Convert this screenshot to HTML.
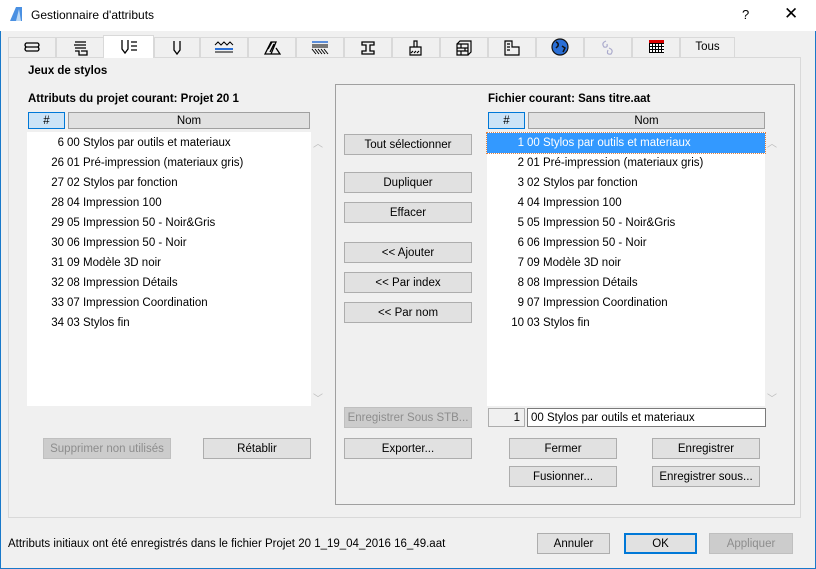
<!DOCTYPE html>
<html><head><meta charset="utf-8"><style>
*{margin:0;padding:0;box-sizing:border-box}
body{width:816px;height:569px;position:relative;background:#f0f0f0;font-family:"Liberation Sans",sans-serif;font-size:11.5px;color:#000;overflow:hidden}
.a{position:absolute}
.win{position:absolute;left:0;top:0;width:816px;height:569px;border:1px solid #1979ca;border-top:none}
.title{left:0;top:0;width:816px;height:31px;background:#fff}
.btn{position:absolute;background:#e1e1e1;border:1px solid #adadad;text-align:center;line-height:20px;height:21px}
.dis{color:#8d8d8d;background:#ccc;border-color:#bfbfbf}
.tab{position:absolute;top:37px;height:20px;border:1px solid #d9d9d9;border-bottom:none;background:#f0f0f0;text-align:center;line-height:19px}
.tab svg{margin-top:2px}
.list{position:absolute;background:#fff}
.row{position:absolute;height:20px;line-height:21px;left:0;right:0;white-space:nowrap}
.row .n{position:absolute;text-align:right;width:37px}
.row .t{position:absolute;left:40px}
.hdr{position:absolute;height:17px;border:1px solid #a0a0a0;background:#e1e1e1;text-align:center;line-height:16px}
.hsel{background:#cce4f7;border:1px solid #0078d7}
b{font-weight:bold}
</style></head><body>
<div class="win"></div>
<div class="a title"></div>
<svg class="a" style="left:9px;top:6px" width="14" height="16"><path d="M1 15 L7 1 L13 1 L13 15 Z" fill="#4a90e2"/><path d="M7 15 L10 3 L12 15Z" fill="#bcd9f5"/></svg>
<div class="a" style="left:31px;top:8px;font-size:12px">Gestionnaire d'attributs</div>
<div class="a" style="left:742px;top:7px;font-size:13px">?</div>
<div class="a" style="left:784px;top:4px;font-size:17px;font-weight:300">✕</div>

<div class="a" style="left:8px;top:57px;width:793px;height:461px;border:1px solid #d9d9d9;background:#f0f0f0"></div>
<div class="tab" style="left:8px;width:48px"><svg width="18" height="14"><g fill="none" stroke="#000" stroke-width="1.3"><path d="M3 3h12M2 7h13M3 11h12"/><path d="M3 3q-2 2 0 4M3 7q-2 2 0 4M15 3q2 2 0 4M15 7q2 2 0 4"/></g></svg></div>
<div class="tab" style="left:56px;width:48px"><svg width="18" height="16"><g fill="none" stroke="#000" stroke-width="1.3"><path d="M4 2h11M3 5h12M4 8h11M4 11h4v4h8v-4h-6"/></g></svg></div>
<div class="tab" style="left:103px;top:35px;height:23px;width:51px;background:#fff;z-index:2"><svg width="22" height="16" style="margin-top:3px"><g fill="none" stroke="#000" stroke-width="1.3"><path d="M4 1v9l3 4 3-4V1M13 3h6M13 7h6M13 11h6"/></g></svg></div>
<div class="tab" style="left:154px;width:46px"><svg width="12" height="16"><path d="M3 1v9l3 4 3-4V1" fill="none" stroke="#000" stroke-width="1.3"/></svg></div>
<div class="tab" style="left:200px;width:48px"><svg width="20" height="14"><path d="M1 5l3-3 3 3 3-3 3 3 3-3 3 3" fill="none" stroke="#000"/><path d="M1 9h18" stroke="#2a6fd6" stroke-width="2"/><path d="M1 12h18" stroke="#000"/></svg></div>
<div class="tab" style="left:248px;width:48px"><svg width="18" height="16"><g fill="none" stroke="#000" stroke-width="1.3"><path d="M2 14l6-12h5l-5 12zM8 14h9l-4-6M5 9l4-7M7 12l4-8"/></g></svg></div>
<div class="tab" style="left:296px;width:48px"><svg width="18" height="16"><path d="M1 2h16" stroke="#2a6fd6" stroke-width="1.5"/><path d="M1 5h16M1 7h16" stroke="#000"/><path d="M1 9l4 5M4 9l4 5M7 9l4 5M10 9l4 5M13 9l4 5" stroke="#000"/></svg></div>
<div class="tab" style="left:344px;width:48px"><svg width="16" height="16"><path d="M2 2h12v3h-4v6h4v3H2v-3h4V5H2z" fill="none" stroke="#000" stroke-width="1.3"/></svg></div>
<div class="tab" style="left:392px;width:48px"><svg width="16" height="16"><g fill="none" stroke="#000" stroke-width="1.2"><path d="M6 1h3v6H6zM2 7h11v8H2zM3 13l2-2M6 13l2-2M9 13l2-2"/></g></svg></div>
<div class="tab" style="left:440px;width:48px"><svg width="18" height="16"><g fill="none" stroke="#000" stroke-width="1.2"><path d="M2 4h11v11H2zM2 4l3-3h11v11l-3 3M2 8h11M2 11h11M6 4v4M10 8v3M6 11v4"/></g></svg></div>
<div class="tab" style="left:488px;width:48px"><svg width="18" height="16"><g fill="none" stroke="#000" stroke-width="1.2"><path d="M2 1h7v6h7v8H2zM4 4h3M4 7h3M4 10h3"/></g></svg></div>
<div class="tab" style="left:536px;width:48px"><svg width="18" height="18" style="margin-top:0"><circle cx="9" cy="9" r="8" fill="#2a6fd6" stroke="#111" stroke-width="1.2"/><path d="M5 4q3 1 2 4l-2 2M11 8l3 2-2 4" stroke="#111" stroke-width="1.5" fill="none"/></svg></div>
<div class="tab" style="left:584px;width:48px"><svg width="18" height="16"><g fill="none" stroke="#aac" stroke-width="1.2"><path d="M7 1q-5 2-2 6 4 1 3-3M10 8q5 2 2 6-5 1-3-4"/></g></svg></div>
<div class="tab" style="left:632px;width:48px"><span style="display:inline-block;width:15px;height:13px;background:repeating-linear-gradient(90deg,#000 0 1px,transparent 1px 3px),repeating-linear-gradient(0deg,#000 0 1px,#fff 1px 3px);border-top:3px solid #d00;vertical-align:middle"></span></div>
<div class="tab" style="left:680px;width:55px">Tous</div>

<div class="a" style="left:28px;top:65px"><b>Jeux de stylos</b></div>
<div class="a" style="left:28px;top:93px"><b>Attributs du projet courant: Projet 20 1</b></div>
<div class="hdr hsel" style="left:28px;top:112px;width:37px">#</div>
<div class="hdr" style="left:68px;top:112px;width:242px">Nom</div>
<div class="list" style="left:27px;top:132px;width:284px;height:274px">
<div class="row" style="top:1px"><span class="n">6</span><span class="t">00 Stylos par outils et materiaux</span></div>
<div class="row" style="top:21px"><span class="n">26</span><span class="t">01 Pré-impression (materiaux gris)</span></div>
<div class="row" style="top:41px"><span class="n">27</span><span class="t">02 Stylos par fonction</span></div>
<div class="row" style="top:61px"><span class="n">28</span><span class="t">04 Impression 100</span></div>
<div class="row" style="top:81px"><span class="n">29</span><span class="t">05 Impression 50 - Noir&amp;Gris</span></div>
<div class="row" style="top:101px"><span class="n">30</span><span class="t">06 Impression 50 - Noir</span></div>
<div class="row" style="top:121px"><span class="n">31</span><span class="t">09 Modèle 3D noir</span></div>
<div class="row" style="top:141px"><span class="n">32</span><span class="t">08 Impression Détails</span></div>
<div class="row" style="top:161px"><span class="n">33</span><span class="t">07 Impression Coordination</span></div>
<div class="row" style="top:181px"><span class="n">34</span><span class="t">03 Stylos fin</span></div>
</div>
<div class="a" style="left:313px;top:135px;color:#bbb;font-size:10px">︿</div>
<div class="a" style="left:313px;top:390px;color:#bbb;font-size:10px">﹀</div>
<div class="btn dis" style="left:43px;top:438px;width:128px">Supprimer non utilisés</div>
<div class="btn" style="left:203px;top:438px;width:108px">Rétablir</div>

<div class="a" style="left:335px;top:84px;width:460px;height:421px;border:1px solid #a0a0a0"></div>
<div class="a" style="left:488px;top:93px"><b>Fichier courant: Sans titre.aat</b></div>
<div class="hdr hsel" style="left:488px;top:112px;width:37px">#</div>
<div class="hdr" style="left:528px;top:112px;width:237px">Nom</div>
<div class="list" style="left:487px;top:132px;width:278px;height:274px">
<div class="row" style="top:1px;height:20px;background:#3399ff;color:#fff;outline:1px dotted #e08040;line-height:20px"><span class="n">1</span><span class="t">00 Stylos par outils et materiaux</span></div>
<div class="row" style="top:21px"><span class="n">2</span><span class="t">01 Pré-impression (materiaux gris)</span></div>
<div class="row" style="top:41px"><span class="n">3</span><span class="t">02 Stylos par fonction</span></div>
<div class="row" style="top:61px"><span class="n">4</span><span class="t">04 Impression 100</span></div>
<div class="row" style="top:81px"><span class="n">5</span><span class="t">05 Impression 50 - Noir&amp;Gris</span></div>
<div class="row" style="top:101px"><span class="n">6</span><span class="t">06 Impression 50 - Noir</span></div>
<div class="row" style="top:121px"><span class="n">7</span><span class="t">09 Modèle 3D noir</span></div>
<div class="row" style="top:141px"><span class="n">8</span><span class="t">08 Impression Détails</span></div>
<div class="row" style="top:161px"><span class="n">9</span><span class="t">07 Impression Coordination</span></div>
<div class="row" style="top:181px"><span class="n">10</span><span class="t">03 Stylos fin</span></div>
</div>
<div class="a" style="left:767px;top:135px;color:#bbb;font-size:10px">︿</div>
<div class="a" style="left:767px;top:390px;color:#bbb;font-size:10px">﹀</div>
<div class="a" style="left:488px;top:408px;width:37px;height:19px;border:1px solid #adadad;background:#f0f0f0;text-align:right;padding-right:4px;line-height:18px">1</div>
<div class="a" style="left:527px;top:408px;width:239px;height:19px;border:1px solid #7a7a7a;background:#fff;padding-left:3px;line-height:18px">00 Stylos par outils et materiaux</div>

<div class="btn" style="left:344px;top:134px;width:128px">Tout sélectionner</div>
<div class="btn" style="left:344px;top:172px;width:128px">Dupliquer</div>
<div class="btn" style="left:344px;top:202px;width:128px">Effacer</div>
<div class="btn" style="left:344px;top:242px;width:128px">&lt;&lt; Ajouter</div>
<div class="btn" style="left:344px;top:272px;width:128px">&lt;&lt; Par index</div>
<div class="btn" style="left:344px;top:302px;width:128px">&lt;&lt; Par nom</div>
<div class="btn dis" style="left:344px;top:407px;width:128px">Enregistrer Sous STB...</div>
<div class="btn" style="left:344px;top:438px;width:128px">Exporter...</div>
<div class="btn" style="left:509px;top:438px;width:108px">Fermer</div>
<div class="btn" style="left:509px;top:466px;width:108px">Fusionner...</div>
<div class="btn" style="left:652px;top:438px;width:108px">Enregistrer</div>
<div class="btn" style="left:652px;top:466px;width:108px">Enregistrer sous...</div>

<div class="a" style="left:8px;top:538px">Attributs initiaux ont été enregistrés dans le fichier Projet 20 1_19_04_2016 16_49.aat</div>
<div class="btn" style="left:537px;top:533px;width:73px">Annuler</div>
<div class="btn" style="left:624px;top:533px;width:73px;border:2px solid #0078d7;line-height:18px">OK</div>
<div class="btn dis" style="left:709px;top:533px;width:84px">Appliquer</div>
</body></html>
